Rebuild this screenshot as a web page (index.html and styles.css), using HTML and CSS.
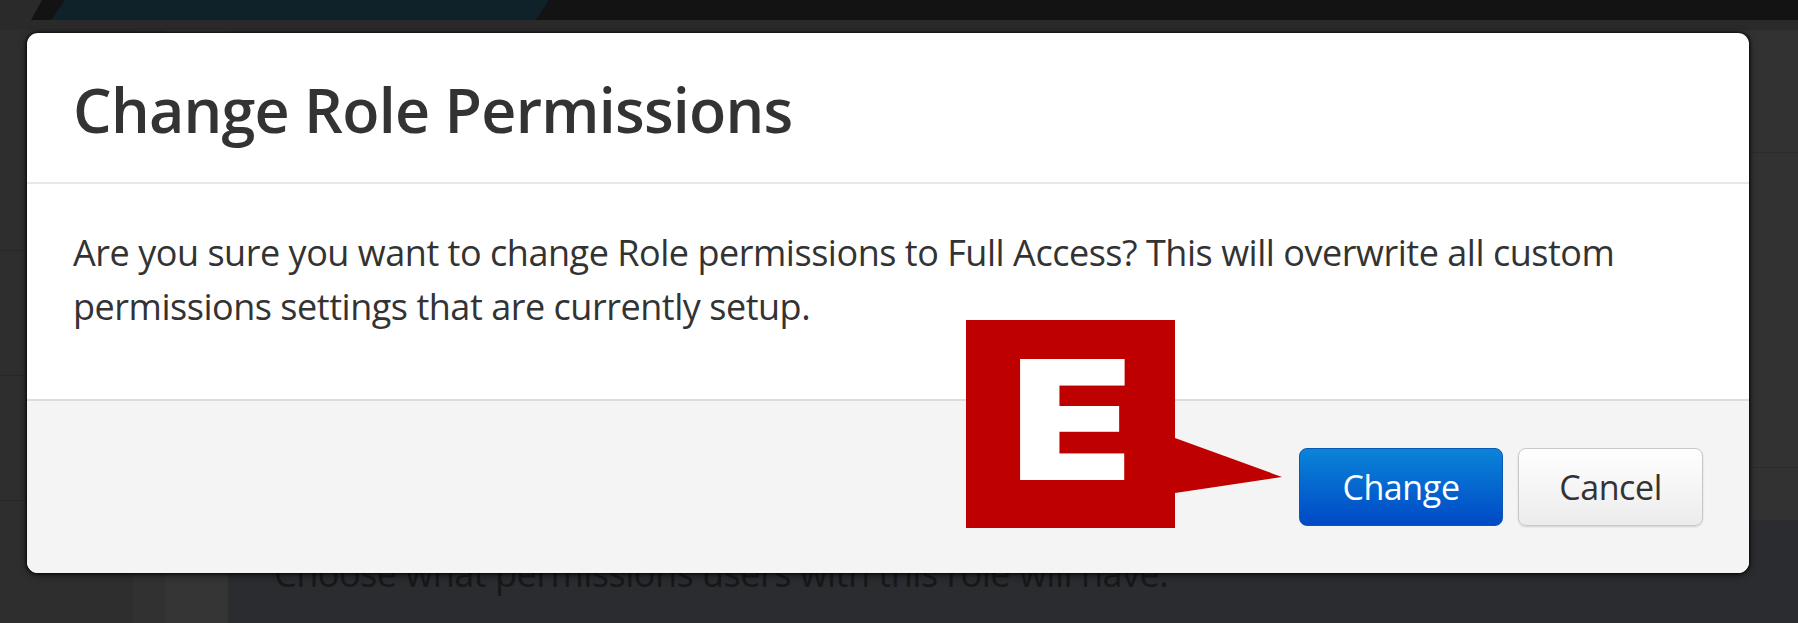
FILE: index.html
```html
<!DOCTYPE html>
<html lang="en">
<head>
<meta charset="utf-8">
<title>Change Role Permissions</title>
<link rel="stylesheet" href="styles.css">
</head>
<body>
<div class="app">
  <header class="topbar"><div class="tb-left"></div><div class="brand"></div></header>
  <div class="subbar"></div>
  <div class="page">
    <aside class="sidebar">
      <div class="side-item"></div>
      <div class="side-item"></div>
      <div class="side-item"></div>
    </aside>
    <div class="rail"></div>
    <div class="rail2"></div>
    <main class="main">
      <div class="main-head">
        <div class="head-row"></div>
      </div>
      <div class="main-body">
        <p class="hint">Choose what permissions users with this role will have.</p>
      </div>
    </main>
  </div>
</div>

<div class="modal" role="dialog" aria-labelledby="modal-title">
  <div class="modal-header">
    <h1 id="modal-title" class="modal-title">Change Role Permissions</h1>
  </div>
  <div class="modal-body">
    <p>Are you sure you want to change Role permissions to Full Access? This will overwrite all custom permissions settings that are currently setup.</p>
  </div>
  <div class="modal-footer">
    <button class="btn btn-primary" type="button">Change</button>
    <button class="btn btn-default" type="button">Cancel</button>
  </div>
</div>

<div class="callout">
  <div class="callout-box"><span class="callout-letter">E</span></div>
  <svg class="callout-arrow" width="108" height="56" viewBox="0 0 108 56"><polygon points="0,0 107,39 0,55" fill="#bf0000"/></svg>
</div>
</body>
</html>
```
FILE: styles.css
```css
* { box-sizing: border-box; }
html, body { margin: 0; padding: 0; }
body {
  width: 1798px;
  height: 623px;
  overflow: hidden;
  background: #2e2e2e;
  font-family: "Open Sans", "Noto Sans", sans-serif;
  position: relative;
}
.app { display: flex; flex-direction: column; height: 623px; }
.topbar {
  height: 20px;
  background: #131313;
  display: flex;
  flex-shrink: 0;
}
.tb-left {
  width: 42px;
  background: #2a2a2a;
  clip-path: polygon(0 0, 42px 0, 31px 100%, 0 100%);
}
.brand {
  margin-left: 9px;
  width: 498px;
  background: #0f2129;
  clip-path: polygon(14px 0, 498px 0, 485px 100%, 0 100%);
}
.subbar { height: 10px; background: #2a2a2a; flex-shrink: 0; }
.page { flex: 1; display: flex; }
.sidebar {
  width: 133px;
  background: #2e2e2e;
  display: flex;
  flex-direction: column;
  padding-top: 220px;
}
.side-item { height: 125px; border-top: 1px solid #272727; }
.rail { width: 32px; background: #313131; }
.rail2 { width: 63px; background: #353535; }
.main { flex: 1; display: flex; flex-direction: column; }
.main-head {
  height: 490px;
  background: #323232;
  display: flex;
  flex-direction: column;
  padding-top: 122px;
}
.head-row { height: 316px; border-top: 1px solid #2b2b2b; border-bottom: 1px solid #2b2b2b; }
.main-body { flex: 1; background: #2a2c2f; padding-left: 46px; }
.hint {
  margin: 29px 0 0;
  color: #16181a;
  font-size: 36px;
  letter-spacing: -0.5px;
  line-height: 49px;
}

.modal {
  position: absolute;
  left: 27px;
  top: 33px;
  width: 1722px;
  height: 540px;
  background: #fff;
  border-radius: 11px;
  box-shadow: 0 0 3px 1px rgba(0,0,0,0.75), 0 2px 8px rgba(0,0,0,0.5);
  display: flex;
  flex-direction: column;
  overflow: hidden;
}
.modal-header {
  height: 151px;
  border-bottom: 2px solid #e8e8e8;
  padding: 46px 46px 0;
}
.modal-title {
  margin: 0;
  font-size: 61px;
  line-height: 1;
  font-weight: 600;
  color: #333;
  letter-spacing: -0.75px;
}
.modal-body {
  height: 217px;
  padding: 42px 46px 0;
  border-bottom: 2px solid #dcdcdc;
}
.modal-body p {
  margin: 0;
  font-size: 36px;
  line-height: 54px;
  color: #333;
  letter-spacing: -0.47px;
}
.modal-footer {
  flex: 1;
  background: #f4f4f4;
  display: flex;
  justify-content: flex-end;
  align-items: center;
  gap: 15px;
  padding: 0 46px 0 0;
}
.btn {
  height: 78px;
  border-radius: 8px;
  font-family: "Open Sans", "Noto Sans", sans-serif;
  font-size: 34px;
  letter-spacing: -0.4px;
  padding: 0;
  cursor: pointer;
}
.btn-primary {
  width: 204px;
  color: #fff;
  background: linear-gradient(#0a84d8, #0049c6);
  border: 1px solid #0a57b8;
}
.btn-default {
  width: 185px;
  color: #333;
  background: linear-gradient(#ffffff, #ececec);
  border: 1px solid #c8c8c8;
  box-shadow: 0 1px 2px rgba(0,0,0,0.15);
}

.callout {
  position: absolute;
  left: 966px;
  top: 320px;
  display: flex;
  align-items: flex-start;
}
.callout-box {
  width: 209px;
  height: 208px;
  background: #bf0000;
  display: flex;
  justify-content: center;
  align-items: center;
}
.callout-letter {
  display: inline-block;
  color: #fff;
  font-family: "Inter", "DejaVu Sans", sans-serif;
  font-weight: 900;
  font-size: 166px;
  line-height: 1;
  margin-left: 3px;
  margin-top: -8px;
  transform: scaleX(1.2);
}
.callout-arrow { margin-top: 118px; display: block; }
```
